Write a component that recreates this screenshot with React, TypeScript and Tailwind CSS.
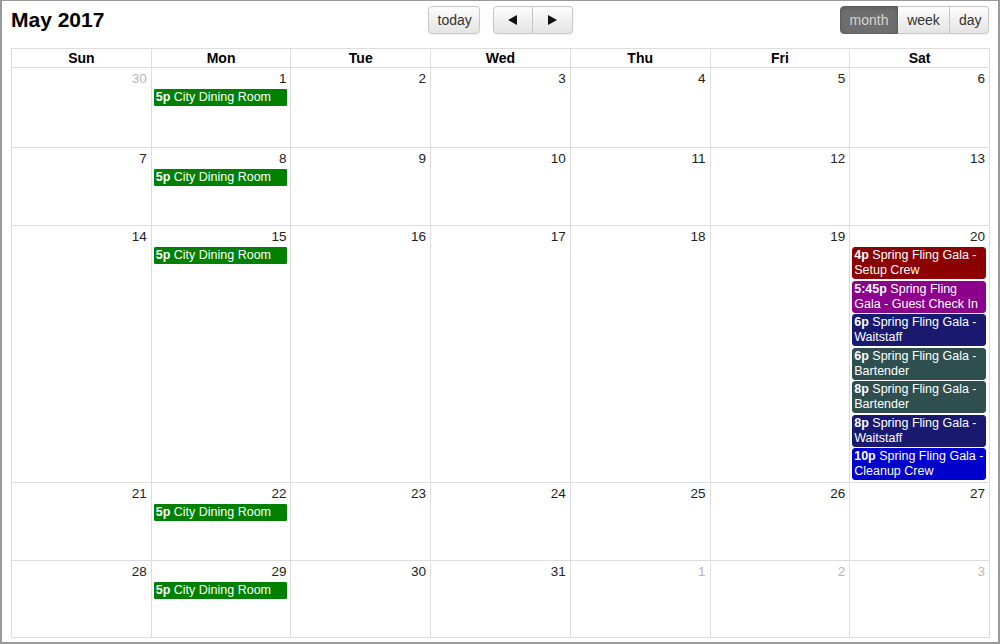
import React from "react";

type Ev = { time: string; title: string; color: string };

const dining: Ev[] = [{ time: "5p", title: "City Dining Room", color: "#008000" }];

const gala: Ev[] = [
  { time: "4p", title: "Spring Fling Gala - Setup Crew", color: "#8b0000" },
  { time: "5:45p", title: "Spring Fling Gala - Guest Check In", color: "#8b008b" },
  { time: "6p", title: "Spring Fling Gala - Waitstaff", color: "#191970" },
  { time: "6p", title: "Spring Fling Gala - Bartender", color: "#2f4f4f" },
  { time: "8p", title: "Spring Fling Gala - Bartender", color: "#2f4f4f" },
  { time: "8p", title: "Spring Fling Gala - Waitstaff", color: "#191970" },
  { time: "10p", title: "Spring Fling Gala - Cleanup Crew", color: "#0000cd" },
];

type Day = { n: number; other?: boolean; events?: Ev[] };

const weeks: { h: string; days: Day[] }[] = [
  {
    h: "h-[80px]",
    days: [{ n: 30, other: true }, { n: 1, events: dining }, { n: 2 }, { n: 3 }, { n: 4 }, { n: 5 }, { n: 6 }],
  },
  {
    h: "h-[78px]",
    days: [{ n: 7 }, { n: 8, events: dining }, { n: 9 }, { n: 10 }, { n: 11 }, { n: 12 }, { n: 13 }],
  },
  {
    h: "h-[256px]",
    days: [{ n: 14 }, { n: 15, events: dining }, { n: 16 }, { n: 17 }, { n: 18 }, { n: 19 }, { n: 20, events: gala }],
  },
  {
    h: "h-[78px]",
    days: [{ n: 21 }, { n: 22, events: dining }, { n: 23 }, { n: 24 }, { n: 25 }, { n: 26 }, { n: 27 }],
  },
  {
    h: "h-[77px]",
    days: [{ n: 28 }, { n: 29, events: dining }, { n: 30 }, { n: 31 }, { n: 1, other: true }, { n: 2, other: true }, { n: 3, other: true }],
  },
];

const btn =
  "h-[28px] px-[9px] text-[14px] text-[#333] border border-[#c8c8c8] bg-gradient-to-b from-[#fdfdfd] to-[#e4e4e4] shadow-[inset_0_1px_0_rgba(255,255,255,0.3),0_1px_2px_rgba(0,0,0,0.05)]";

function Event({ ev, single }: { ev: Ev; single: boolean }) {
  return (
    <div
      className={`ml-[2px] mr-[3px] mb-[1.5px] border px-[1px] text-[12.5px] leading-[15px] text-white ${single ? "rounded-[1px]" : "rounded-[3px]"}`}
      style={{ backgroundColor: ev.color, borderColor: ev.color }}
    >
      <span className="font-bold">{ev.time}</span> {ev.title}
    </div>
  );
}

export default function App() {
  return (
    <div
      className="w-[1000px] h-[644px] bg-white border-2 border-t-[1px] border-[#9a9a9a] px-[9px]"
      style={{ fontFamily: '"Liberation Sans", Arial, sans-serif' }}
    >
      {/* Toolbar */}
      <div className="flex items-start h-[47px] pt-[5px]">
        <div className="flex-1">
          <h2 className="text-[21px] font-bold text-black leading-[24px] mt-[2px]">May 2017</h2>
        </div>
        <div className="flex gap-[13px]">
          <button className={`${btn} rounded-[4px] w-[52px]`}>today</button>
          <div className="flex">
            <button className={`${btn} rounded-l-[4px] w-[40px] flex items-center justify-center`}>
              <svg width="9" height="10" viewBox="0 0 9 10">
                <path d="M0 5 L9 0 L9 10 Z" fill="#111" />
              </svg>
            </button>
            <button className={`${btn} rounded-r-[4px] border-l-0 w-[40px] flex items-center justify-center`}>
              <svg width="9" height="10" viewBox="0 0 9 10">
                <path d="M9 5 L0 0 L0 10 Z" fill="#111" />
              </svg>
            </button>
          </div>
        </div>
        <div className="flex-1 flex justify-end">
          <div className="flex">
            <button className="h-[28px] w-[58px] text-[14px] text-[#d4d4d4] bg-[#6e6e6e] border border-[#5e5e5e] rounded-l-[4px] shadow-[inset_0_2px_4px_rgba(0,0,0,0.15)]">
              month
            </button>
            <button className={`${btn} border-l-0 w-[52px]`}>week</button>
            <button className={`${btn} border-l-0 rounded-r-[4px] w-[39px]`}>day</button>
          </div>
        </div>
      </div>

      {/* Month grid */}
      <table className="w-[979px] table-fixed border-collapse">
        <thead>
          <tr className="h-[19px]">
            {["Sun", "Mon", "Tue", "Wed", "Thu", "Fri", "Sat"].map((d) => (
              <th key={d} className="border border-[#dddddd] text-[14px] font-bold text-black leading-[17px] p-0">
                {d}
              </th>
            ))}
          </tr>
        </thead>
        <tbody>
          {weeks.map((w, wi) => (
            <tr key={wi} className={w.h}>
              {w.days.map((d, di) => (
                <td key={di} className="border border-[#dddddd] align-top p-0">
                  <div
                    className={`h-[21px] pt-[2px] pr-[4px] text-right text-[13.5px] leading-[17px] ${d.other ? "text-[#b8b8b8]" : "text-[#222]"}`}
                  >
                    {d.n}
                  </div>
                  {d.events?.map((ev, i) => (
                    <Event key={i} ev={ev} single={d.events!.length === 1} />
                  ))}
                </td>
              ))}
            </tr>
          ))}
        </tbody>
      </table>
    </div>
  );
}
